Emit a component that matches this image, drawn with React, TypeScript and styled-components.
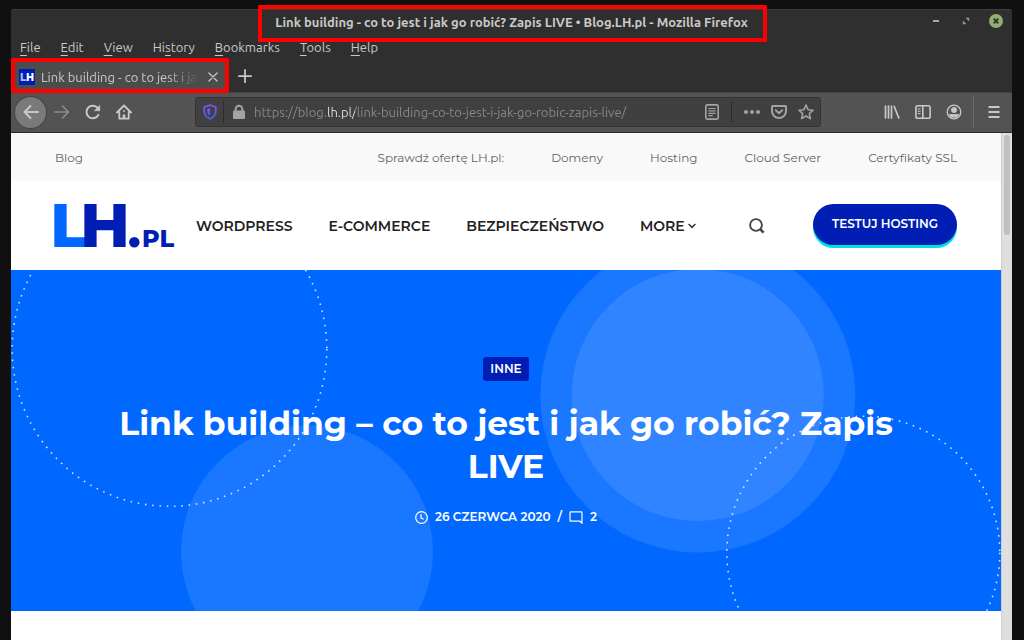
import React from "react";
import styled, { createGlobalStyle } from "styled-components";

const chromeFont = `Ubuntu, "Noto Sans", "Open Sans", sans-serif`;
const siteFont = `Montserrat, Inter, "Open Sans", sans-serif`;

const color = {
  desktop: "#101010",
  frame: "#2f2f2f",
  toolbar: "#535353",
  field: "#404040",
  chromeText: "#c9c9c9",
  chromeMuted: "#8d8d8d",
  mark: "#ff0000",
  blue: "#0068ff",
  navy: "#001eb4",
  cyan: "#00e0e0",
};

const GlobalStyle = createGlobalStyle`
  *, *::before, *::after { box-sizing: border-box; }
  body { margin: 0; background: ${color.desktop}; }
  button, input { font: inherit; color: inherit; margin: 0; }
  button { padding: 0; border: 0; background: none; cursor: pointer; }
  a { color: inherit; text-decoration: none; }
`;

const Desktop = styled.div`
  display: flex;
  min-height: 100vh;
  padding: 9px 12px 0 11px;
  background: ${color.desktop};
`;

const Window = styled.div`
  flex: 1;
  min-width: 0;
  display: flex;
  flex-direction: column;
  background: ${color.frame};
  border-radius: 3px 3px 0 0;
  font-family: ${chromeFont};
  color: ${color.chromeText};
`;

const TitleBar = styled.header`
  display: grid;
  grid-template-columns: 1fr auto 1fr;
  align-items: center;
  height: 27px;
  padding-bottom: 2px;
  box-shadow: inset 0 1px #3d3d3d;
  border-radius: 3px 3px 0 0;
`;

const WindowTitle = styled.div`
  position: relative;
  grid-column: 2;
  font-size: 13px;
  line-height: 16px;
  font-weight: 600;
  white-space: nowrap;

  &::after {
    content: "";
    position: absolute;
    inset: -9px -19px -12px -17px;
    border: 4px solid ${color.mark};
    border-radius: 1px;
  }
`;

const WindowControls = styled.div`
  display: flex;
  justify-content: flex-end;
  gap: 14px;
  padding: 0 8px 2px 0;
`;

const WindowButton = styled.button`
  display: grid;
  place-items: center;
  width: 16px;
  height: 16px;
`;

const MenuBar = styled.nav`
  display: flex;
  align-items: center;
  gap: 20px;
  height: 23px;
  padding: 0 0 2px 9px;
  font-size: 13px;
  line-height: 18px;

  u {
    text-decoration-thickness: 1px;
    text-underline-offset: 3px;
  }
`;

const TabStrip = styled.div`
  display: flex;
  align-items: center;
  height: 33px;
`;

const Tab = styled.div`
  position: relative;
  display: flex;
  align-items: center;
  width: 218px;
  height: 35px;
  padding: 2px 2px 0 4px;
  border: 4px solid ${color.mark};
  border-radius: 2px;
  background: #4c4c4c;
`;

const TabTitle = styled.span`
  flex: 1;
  min-width: 0;
  margin: 0 4px 0 6px;
  overflow: hidden;
  white-space: nowrap;
  font-size: 13px;
  line-height: 20px;
  mask-image: linear-gradient(to left, transparent, #000 32px);
`;

const TabClose = styled.button`
  display: grid;
  place-items: center;
  width: 20px;
  height: 20px;
`;

const NewTab = styled.button`
  display: grid;
  place-items: center;
  width: 32px;
  height: 32px;
`;

const Toolbar = styled.div`
  display: flex;
  align-items: center;
  height: 41px;
  padding: 0 3px 1px 4px;
  background: ${color.toolbar};
  border-top: 1px solid #444;
  border-bottom: 1px solid #2c2c2c;
`;

const ToolButton = styled.button<{ $dim?: boolean }>`
  display: grid;
  place-items: center;
  width: 31px;
  height: 32px;
  color: ${(p) => (p.$dim ? color.chromeMuted : color.chromeText)};
`;

const BackButton = styled(ToolButton)`
  width: 31px;
  height: 31px;
  border-radius: 50%;
  background: #7a7a7a;
  box-shadow: 0 0 0 1px #444;
`;

const ToolDivider = styled.span`
  width: 1px;
  height: 32px;
  margin: 0 4px;
  background: #6c6c6c;
`;

const AddressBar = styled.form`
  flex: 1;
  min-width: 0;
  display: flex;
  align-items: center;
  height: 30px;
  margin: 0 55px 0 56px;
  padding-right: 1px;
  border: 1px solid #343434;
  border-radius: 3px;
  background: ${color.field};
`;

const FieldButton = styled.button`
  flex: none;
  display: grid;
  place-items: center;
  width: 27px;
  height: 28px;
  color: #a3a3a3;
`;

const FieldDivider = styled.span<{ $spaced?: boolean }>`
  flex: none;
  width: 1px;
  height: 22px;
  margin: ${(p) => (p.$spaced ? "0 6px" : "0 1px 0 0")};
  background: #2d2d2d;
`;

const AddressInput = styled.input`
  flex: 1;
  min-width: 0;
  height: 28px;
  padding: 0 0 0 2px;
  border: 0;
  outline: 0;
  font-size: 13px;
  color: transparent;
  background: linear-gradient(
    to right,
    #8a8a8a 76px,
    #dedede 76px 103px,
    #8a8a8a 103px
  );
  background-clip: text;
  -webkit-background-clip: text;
`;

const Viewport = styled.div`
  flex: 1;
  display: flex;
  background: #fff;
`;

const Page = styled.div`
  flex: 1;
  min-width: 0;
  font-family: ${siteFont};
`;

const ScrollTrack = styled.div`
  width: 11px;
  padding: 2px;
  background: #dfdfdd;
  border-left: 1px solid #cdcdcb;
`;

const ScrollThumb = styled.div`
  height: 100px;
  border-radius: 4px;
  background: #c0c0be;
`;

const TopLinks = styled.div`
  display: flex;
  align-items: center;
  gap: 47px;
  height: 48px;
  padding: 1px 44px 0;
  background: #f9f9f9;
  color: #636363;
  font-size: 12px;
  line-height: 17px;
  white-space: nowrap;

  & > :first-child {
    margin-right: auto;
  }
`;

const SiteHeader = styled.header`
  display: flex;
  align-items: center;
  height: 89px;
  padding: 0 44px 0 37px;
  color: #222;
`;

const LogoLink = styled.a`
  display: flex;
`;

const MainNav = styled.nav`
  display: flex;
  gap: 36px;
  margin: 0 auto 0 20px;
  font-size: 14px;
  line-height: 20px;
  font-weight: 600;
  white-space: nowrap;

  a {
    display: flex;
    align-items: center;
    gap: 3px;
  }
`;

const SearchButton = styled.button`
  display: grid;
  place-items: center;
  width: 18px;
  height: 18px;
  margin-right: 47px;
`;

const CallToAction = styled.a`
  display: grid;
  place-items: center;
  width: 144px;
  height: 41px;
  margin-bottom: 3px;
  border-radius: 21px;
  background: ${color.navy};
  box-shadow: 0 3px ${color.cyan};
  color: #fff;
  font-size: 12px;
  line-height: 16px;
  font-weight: 600;
  white-space: nowrap;
`;

const Hero = styled.section`
  position: relative;
  display: flex;
  flex-direction: column;
  align-items: center;
  min-height: 341px;
  padding: 87px 90px 84px;
  background: ${color.blue};
  color: #fff;
  text-align: center;
`;

const HeroArt = styled.svg`
  position: absolute;
  inset: 0;
  width: 100%;
  height: 100%;
`;

const Category = styled.a`
  position: relative;
  padding: 4px 7px;
  border-radius: 3px;
  background: ${color.navy};
  font-size: 12px;
  line-height: 16px;
  font-weight: 600;
`;

const Headline = styled.h1`
  position: relative;
  margin: 21px 0 19px;
  font-size: 33px;
  line-height: 43px;
  font-weight: 700;
`;

const Meta = styled.div`
  position: relative;
  display: flex;
  align-items: center;
  gap: 7px;
  font-size: 12px;
  line-height: 20px;
  font-weight: 600;
`;

function Icon({
  size = 16,
  width = 2,
  children,
}: {
  size?: number;
  width?: number;
  children: React.ReactNode;
}) {
  return (
    <svg
      width={size}
      height={size}
      viewBox="0 0 16 16"
      fill="none"
      stroke="currentColor"
      strokeWidth={width}
      strokeLinecap="round"
      strokeLinejoin="round"
      aria-hidden="true"
    >
      {children}
    </svg>
  );
}

function Favicon() {
  return (
    <svg width="16" height="16" viewBox="0 0 16 16" aria-hidden="true">
      <rect width="16" height="16" fill={color.navy} />
      <text x="8" y="12" textAnchor="middle" fontFamily={siteFont} fontSize="10" fontWeight="800" fill="#fff">
        <tspan fill="#a9b8ff">L</tspan>
        <tspan>H</tspan>
      </text>
    </svg>
  );
}

function Logo() {
  return (
    <svg width="128" height="79" viewBox="0 0 128 79" role="img" aria-label="LH.pl">
      <g fontFamily={siteFont} fontWeight="800">
        <text x="2" y="61" fontSize="62" fill={color.blue}>
          L
        </text>
        <text x="32" y="61" fontSize="62" fill={color.navy}>
          H
        </text>
        <text x="94" y="61" fontSize="24" fill={color.navy}>
          PL
        </text>
      </g>
      <circle cx="86.300" cy="56.300" r="5.200" fill={color.navy} />
    </svg>
  );
}

function HeroBackground() {
  return (
    <HeroArt viewBox="0 0 990 341" preserveAspectRatio="xMidYMid slice" aria-hidden="true">
      <g fill="#fff" fillOpacity="0.1">
        <circle cx="296" cy="281.5" r="126" />
        <circle cx="686.8" cy="125" r="157.5" />
        <circle cx="686.8" cy="125" r="126" />
      </g>
      <g fill="none" stroke="#fff" strokeOpacity="0.8" strokeWidth="1.6" strokeDasharray="1.6 5.7">
        <circle cx="158.5" cy="79" r="157.3" />
        <circle cx="852.3" cy="282.7" r="136.5" />
      </g>
    </HeroArt>
  );
}

const menus = ["_File", "_Edit", "_View", "Hi_story", "_Bookmarks", "_Tools", "_Help"];
const offers = ["Domeny", "Hosting", "Cloud Server", "Certyfikaty SSL"];
const sections = ["WORDPRESS", "E-COMMERCE", "BEZPIECZEŃSTWO"];

function MenuItem({ label }: { label: string }) {
  const at = label.indexOf("_");
  return (
    <button type="button">
      {label.slice(0, at)}
      <u>{label[at + 1]}</u>
      {label.slice(at + 2)}
    </button>
  );
}

function BrowserToolbar() {
  return (
    <Toolbar>
      <BackButton type="button" aria-label="Back">
        <Icon>
          <path d="M15 8H1.5M7.5 2 1.5 8l6 6" />
        </Icon>
      </BackButton>
      <ToolButton type="button" aria-label="Forward" $dim>
        <Icon width={1.6}>
          <path d="M1 8h13.500M8.500 2l6 6-6 6" />
        </Icon>
      </ToolButton>
      <ToolButton type="button" aria-label="Reload">
        <Icon>
          <path d="M13.300 11A6.300 6.300 0 1 1 12 3.300L14 5.200" />
          <path d="M14.800 1.500v5.300H9.500z" fill="currentColor" strokeWidth="0.500" />
        </Icon>
      </ToolButton>
      <ToolButton type="button" aria-label="Home">
        <Icon width={1.8}>
          <path d="M1 8.500 8 1.500l7 7M3.300 8v6.700h9.400V8" />
          <path d="M8 14.500v-4" strokeWidth="2.600" strokeLinecap="butt" />
          <path d="M8 7h.01" />
        </Icon>
      </ToolButton>

      <AddressBar onSubmit={(e) => e.preventDefault()}>
        <FieldButton type="button" aria-label="Tracking protection">
          <svg width="14" height="16" viewBox="0 0 14 16" fill="none" aria-hidden="true">
            <defs>
              <linearGradient id="shield" x1="0" y1="0" x2="0" y2="1">
                <stop offset="0" stopColor="#8a4df0" />
                <stop offset="1" stopColor="#3b62f0" />
              </linearGradient>
            </defs>
            <path
              d="M7 1.200 12.800 3v4c0 3.800-2.200 6.300-5.800 7.800C3.400 13.300 1.200 10.800 1.200 7V3z"
              stroke="url(#shield)"
              strokeWidth="1.800"
              strokeLinejoin="round"
            />
            <path d="M7 4.300v7.300C5 10.500 4.200 9 4.200 7V5.200z" fill="url(#shield)" />
          </svg>
        </FieldButton>
        <FieldDivider />
        <FieldButton type="button" aria-label="Connection secure">
          <Icon>
            <path d="M4.700 8V5a3.300 3.300 0 0 1 6.600 0v3" />
            <rect x="3" y="7.500" width="10" height="6.500" fill="currentColor" />
          </Icon>
        </FieldButton>
        <AddressInput
          type="text"
          aria-label="Address"
          defaultValue="https://blog.lh.pl/link-building-co-to-jest-i-jak-go-robic-zapis-live/"
        />
        <FieldButton type="button" aria-label="Reader view">
          <Icon width={1.6}>
            <rect x="1.800" y="0.900" width="12.400" height="14.200" rx="1.500" />
            <path d="M4.800 4.500h6.400M4.800 6.900h6.400M4.800 9.300h6.400M4.800 11.700h3.500" strokeWidth="1.200" />
          </Icon>
        </FieldButton>
        <FieldDivider $spaced />
        <FieldButton type="button" aria-label="Page actions">
          <svg width="16" height="16" viewBox="0 0 16 16" fill="currentColor" aria-hidden="true">
            <circle cx="2" cy="8" r="2" />
            <circle cx="8" cy="8" r="2" />
            <circle cx="14" cy="8" r="2" />
          </svg>
        </FieldButton>
        <FieldButton type="button" aria-label="Save to Pocket">
          <Icon>
            <path d="M2 2h12c.6 0 1 .4 1 1v4.200a7 6.800 0 0 1-14 0V3c0-.6.4-1 1-1z" />
            <path d="M4.800 6.200 8 9.200l3.200-3" />
          </Icon>
        </FieldButton>
        <FieldButton type="button" aria-label="Bookmark this page">
          <Icon width={1.6}>
            <path d="m8 1 2.100 4.700 5 .5-3.800 3.400 1.100 5L8 12l-4.400 2.600 1.100-5L.9 6.200l5-.5z" />
          </Icon>
        </FieldButton>
      </AddressBar>

      <ToolButton type="button" aria-label="Library">
        <Icon width={1.7}>
          <path d="M1.500 2v12M4.500 2v12M7.500 2v12M10.200 2.500l4.600 11.500" />
        </Icon>
      </ToolButton>
      <ToolButton type="button" aria-label="Sidebars">
        <Icon width={1.6}>
          <rect x="0.900" y="1.800" width="14.200" height="12.400" rx="1.800" />
          <path d="M7.800 2v12" />
          <path d="M3 5h2.200M3 7.300h2.200M3 9.600h2.200" strokeWidth="1" />
        </Icon>
      </ToolButton>
      <ToolButton type="button" aria-label="Account">
        <Icon width={1.3}>
          <circle cx="8" cy="8" r="6.800" />
          <circle cx="8" cy="6" r="2.300" fill="currentColor" />
          <path d="M3.800 10.500c1.500.5 6.900.5 8.400 0-1 3.200-7.400 3.200-8.400 0z" fill="currentColor" />
        </Icon>
      </ToolButton>
      <ToolDivider />
      <ToolButton type="button" aria-label="Open menu">
        <Icon>
          <path d="M2.500 3h11M2.500 8h11M2.500 13h11" strokeLinecap="butt" />
        </Icon>
      </ToolButton>
    </Toolbar>
  );
}

function BlogPage() {
  return (
    <Page>
      <TopLinks>
        <a href="#blog">Blog</a>
        <span>Sprawdź ofertę LH.pl:</span>
        {offers.map((offer) => (
          <a href="#offer" key={offer}>
            {offer}
          </a>
        ))}
      </TopLinks>
      <SiteHeader>
        <LogoLink href="#home">
          <Logo />
        </LogoLink>
        <MainNav>
          {sections.map((section) => (
            <a href="#section" key={section}>
              {section}
            </a>
          ))}
          <a href="#more">
            MORE
            <svg width="8" height="6" viewBox="0 0 8 6" fill="none" stroke="#333" strokeWidth="1.500" aria-hidden="true">
              <path d="M.6 1 4 4.400 7.400 1" />
            </svg>
          </a>
        </MainNav>
        <SearchButton type="button" aria-label="Szukaj">
          <svg width="16" height="16" viewBox="0 0 16 16" fill="none" stroke="#444" strokeWidth="1.900" aria-hidden="true">
            <circle cx="7" cy="7" r="5.900" />
            <path d="m11.200 11.200 3.400 3.400" strokeWidth="2.600" />
          </svg>
        </SearchButton>
        <CallToAction href="#test">TESTUJ HOSTING</CallToAction>
      </SiteHeader>
      <Hero>
        <HeroBackground />
        <Category href="#inne">INNE</Category>
        <Headline>Link building – co to jest i jak go robić? Zapis LIVE</Headline>
        <Meta>
          <svg width="13" height="13" viewBox="0 0 13 13" fill="none" stroke="#fff" strokeWidth="1.200" aria-hidden="true">
            <circle cx="6.500" cy="6.500" r="5.800" />
            <path d="M6 3v4l2.800 1.300" />
          </svg>
          <time dateTime="2020-06-26">26 CZERWCA 2020</time>
          <span>/</span>
          <svg width="14" height="13" viewBox="0 0 14 13" fill="none" stroke="#fff" strokeWidth="1.200" aria-hidden="true">
            <path d="M1.600.8h10.800c.4 0 .6.200.6.600v10.800L10.800 10.200H1.600c-.4 0-.6-.2-.6-.6V1.400c0-.4.200-.6.600-.6z" />
          </svg>
          <span>2</span>
        </Meta>
      </Hero>
    </Page>
  );
}

export default function App() {
  return (
    <>
      <GlobalStyle />
      <Desktop>
        <Window>
          <TitleBar>
            <WindowTitle>
              Link building - co to jest i jak go robić? Zapis LIVE • Blog.LH.pl - Mozilla Firefox
            </WindowTitle>
            <WindowControls>
              <WindowButton type="button" aria-label="Minimize">
                <svg width="6" height="2" viewBox="0 0 6 2" aria-hidden="true">
                  <path d="M0 1h6" stroke="#aaa" strokeWidth="2" />
                </svg>
              </WindowButton>
              <WindowButton type="button" aria-label="Maximize">
                <svg width="8" height="8" viewBox="0 0 8 8" fill="#999" aria-hidden="true">
                  <path d="M3.500.8H7.200V4.500zM.8 3.500V7.200H4.500z" />
                </svg>
              </WindowButton>
              <WindowButton type="button" aria-label="Close window">
                <svg width="14" height="14" viewBox="0 0 14 14" aria-hidden="true">
                  <circle cx="7" cy="7" r="7" fill="#93ad74" />
                  <path d="m4.700 4.700 4.600 4.600m0-4.600L4.700 9.300" stroke="#2f2f2f" strokeWidth="1.800" />
                </svg>
              </WindowButton>
            </WindowControls>
          </TitleBar>
          <MenuBar>
            {menus.map((label) => (
              <MenuItem key={label} label={label} />
            ))}
          </MenuBar>
          <TabStrip>
            <Tab>
              <Favicon />
              <TabTitle>Link building - co to jest i jak go robić?</TabTitle>
              <TabClose type="button" aria-label="Close tab">
                <Icon size={10}>
                  <path d="m1.500 1.500 13 13m0-13-13 13" />
                </Icon>
              </TabClose>
            </Tab>
            <NewTab type="button" aria-label="New tab">
              <Icon size={14}>
                <path d="M8 1v14M1 8h14" />
              </Icon>
            </NewTab>
          </TabStrip>
          <BrowserToolbar />
          <Viewport>
            <BlogPage />
            <ScrollTrack>
              <ScrollThumb />
            </ScrollTrack>
          </Viewport>
        </Window>
      </Desktop>
    </>
  );
}
